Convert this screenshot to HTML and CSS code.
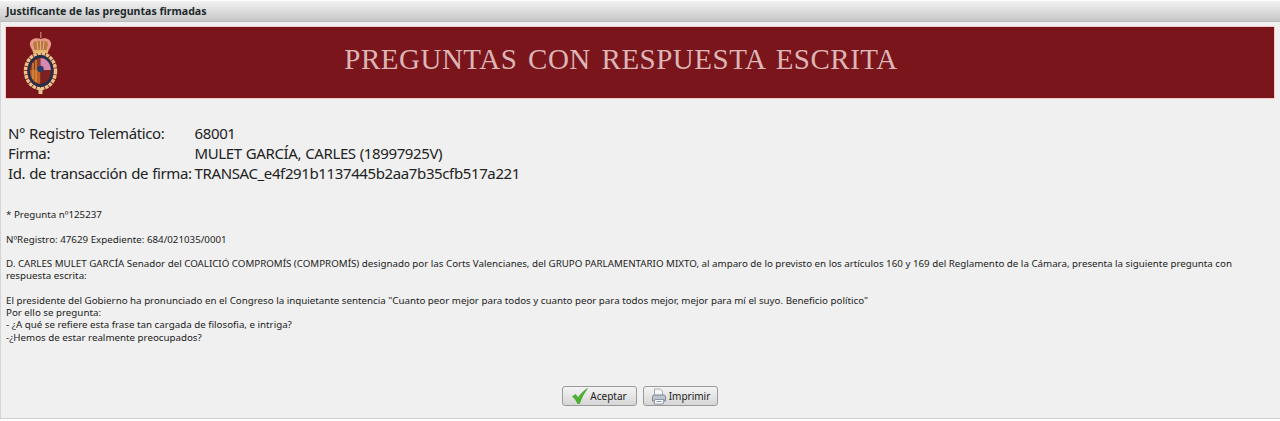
FILE: index.html
```html
<!DOCTYPE html>
<html>
<head>
    <meta name="viewport" content="width=device-width, initial-scale=1">
    <title>Justificante de las preguntas firmadas</title>
    <link rel="stylesheet" href="styles.css">
</head>
<body>
<div class="window">
    <div class="titlebar">Justificante de las preguntas firmadas</div>
    <div class="content">
        <div class="banner">
            <svg class="crest" width="38" height="64" viewBox="0 0 38 64">
                <defs><filter id="soft"><feGaussianBlur stdDeviation="0.45"/></filter></defs>
                <g filter="url(#soft)">
                    <!-- corona -->
                    <rect x="18" y="0" width="1.500" height="6" fill="#b5735f"/>
                    <path d="M8 13C7 7 14 5 18.500 7C23 5 30 7 29 13C28.500 16 27 17 26 20H11C10 17 8.500 16 8 13Z" fill="#e8988a"/>
                    <path d="M11 12C11 9 15 8 18.500 9C22 8 26 9 26 12L24.500 18H12.500Z" fill="#b97a3c"/>
                    <path d="M15 9L16 18M18.500 8V18M22 9L21 18" stroke="#e8a890" stroke-width="1" fill="none"/>
                    <rect x="11" y="18" width="15" height="3" fill="#e3b46a"/>
                    <!-- collar -->
                    <ellipse cx="18.500" cy="39" rx="15" ry="17.500" fill="none" stroke="#e4c48c" stroke-width="3.500" stroke-dasharray="3.500 .8"/>
                    <ellipse cx="18.500" cy="39" rx="12.800" ry="16" fill="#1f3150"/>
                    <!-- escudo -->
                    <ellipse cx="18.500" cy="39" rx="10.500" ry="13.500" fill="#4a1e1c"/>
                    <path d="M18.500 26C14 26 9 29 8 38H18.500Z" fill="#8f3a28"/>
                    <path d="M18.500 26C23 26 28 29 29 38H18.500Z" fill="#d688b0"/>
                    <path d="M8 38C8 47 13 52 18.500 52V38Z" fill="#c2602c"/>
                    <path d="M29 38C29 47 24 52 18.500 52V38Z" fill="#7c2420"/>
                    <path d="M11 31V47M14 28V50" stroke="#d9963e" stroke-width="1.200"/>
                    <circle cx="18.500" cy="37" r="3.200" fill="#2c3a68"/>
                    <rect x="16.500" y="56" width="4" height="6" fill="#e4c48c"/>
                </g>
            </svg>
            <h1 class="banner-title">PREGUNTAS CON RESPUESTA ESCRITA</h1>
        </div>

        <table class="data">
            <tr><td class="lbl">N° Registro Telemático:</td><td>68001</td></tr>
            <tr><td class="lbl">Firma:</td><td>MULET GARCÍA, CARLES (18997925V)</td></tr>
            <tr><td class="lbl">Id. de transacción de firma:</td><td>TRANSAC_e4f291b1137445b2aa7b35cfb517a221</td></tr>
        </table>

        <div class="question">
            <p>* Pregunta nº125237</p>
            <p>NºRegistro: 47629 Expediente: 684/021035/0001</p>
            <p>D. CARLES MULET GARCÍA Senador del COALICIÓ COMPROMÍS (COMPROMÍS) designado por las Corts Valencianes, del GRUPO PARLAMENTARIO MIXTO, al amparo de lo previsto en los artículos 160 y 169 del Reglamento de la Cámara, presenta la siguiente pregunta con respuesta escrita:</p>
            <p>El presidente del Gobierno ha pronunciado en el Congreso la inquietante sentencia "Cuanto peor mejor para todos y cuanto peor para todos mejor, mejor para mí el suyo. Beneficio político"<br>
            Por ello se pregunta:<br>
            - ¿A qué se refiere esta frase tan cargada de filosofia, e intriga?<br>
            -¿Hemos de estar realmente preocupados?</p>
        </div>

        <div class="buttons">
            <button type="button" class="btn">
                <svg width="16" height="16" viewBox="0 0 16 16"><path d="M0.500 8.500L3.500 6.500L6.200 9.800C8.500 6 11.500 3 15.500 0.500C12.500 4.500 9.500 9.500 7.500 15.500H5.500C4.500 12.500 2.800 10.500 0.500 8.500Z" fill="#4cb52c" stroke="#2f8a1e" stroke-width=".5"/></svg>
                Aceptar
            </button>
            <button type="button" class="btn">
                <svg width="16" height="17" viewBox="0 0 16 17">
                    <path d="M3.500 1H9.500L11.500 3V8H3.500Z" fill="#f4f6f8" stroke="#a2acb6"/>
                    <path d="M1.500 8.500C1.500 7.500 2.500 7 3.500 7H12.500C13.500 7 14.500 7.500 14.500 8.500V13H1.500Z" fill="#bcc4ce" stroke="#7b8590"/>
                    <path d="M4 11.500H13L12 16H3Z" fill="#fff" stroke="#8c96a0"/>
                    <path d="M5.500 13.500H10.500" stroke="#6f9ac4"/>
                </svg>
                Imprimir
            </button>
        </div>
    </div>
</div>
</body>
</html>
```
FILE: styles.css
```css
html, body {
    margin: 0;
    height: 100%;
    background-color: #fff;
}

body {
    font-family: "Noto Sans", Tahoma, sans-serif;
    color: #222;
    overflow: hidden;
}

.window {
    height: 417px;
    margin-top: 1px;
    display: flex;
    flex-direction: column;
    background-color: #f0f0f0;
    border-bottom: 1px solid #cfcfcf;
}

.titlebar {
    height: 20px;
    line-height: 20px;
    padding-left: 6px;
    font-size: 10.6px;
    font-weight: bold;
    color: #1d2a2c;
    background: linear-gradient(to bottom, #f2f2f2, #c6c6c6);
    border-bottom: 1px solid #bdbdbd;
}

.content {
    flex: 1;
    display: flex;
    flex-direction: column;
    padding: 5px 6px 0 5px;
    border-left: 1px solid #d4d4d4;
}

.banner {
    height: 71px;
    display: flex;
    align-items: center;
    justify-content: center;
    position: relative;
    background-color: #7a151c;
    outline: 1px solid #f3c9c9;
}

.crest {
    position: absolute;
    left: 16px;
    top: 5px;
}

.banner-title {
    margin: 0 38px 7px 0;
    font-family: "Liberation Serif", serif;
    font-size: 29px;
    font-weight: normal;
    letter-spacing: 0.5px;
    word-spacing: 3px;
    color: #dcb6b6;
}

.data {
    align-self: flex-start;
    border-collapse: collapse;
    margin-top: 25px;
    margin-left: 2px;
    font-size: 15px;
    letter-spacing: -0.38px;
    word-spacing: 0.5px;
    line-height: 20px;
}

.data td {
    padding: 0;
}

.data .lbl {
    padding-right: 3px;
}

.question {
    margin-top: 26px;
    padding-right: 30px;
    font-size: 9.75px;
    line-height: 12.25px;
}

.question p {
    margin: 0 0 12.25px 0;
}

.buttons {
    margin-top: auto;
    padding-bottom: 12px;
    display: flex;
    justify-content: center;
    gap: 6px;
}

.btn {
    height: 20px;
    width: 75px;
    padding: 0;
    display: flex;
    align-items: center;
    justify-content: center;
    gap: 2px;
    font-family: inherit;
    font-size: 10px;
    color: #222;
    background: linear-gradient(to bottom, #f4f4f4, #d6d6d6);
    border: 1px solid #9a9a9a;
    border-radius: 3px;
}
```
